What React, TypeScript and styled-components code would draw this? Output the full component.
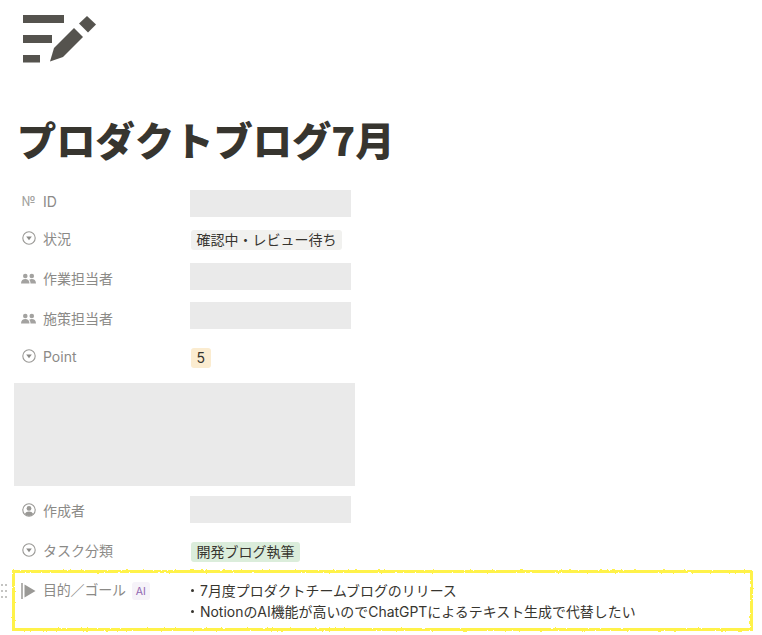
import React from "react";
import styled, { createGlobalStyle } from "styled-components";

const Global = createGlobalStyle`
  html, body { margin: 0; padding: 0; background: #fff; }
  body { font-family: Inter, "Liberation Sans", "Noto Sans CJK JP", sans-serif; color: #37352f; }
`;

const Page = styled.div`
  width: 762px;
  height: 635px;
  overflow: hidden;
  display: flex;
  flex-direction: column;
  box-sizing: border-box;
  padding-top: 15px;
`;

const Logo = styled.svg`
  display: block;
  width: 75px;
  height: 48px;
  margin-left: 22px;
  flex: none;
`;

const Title = styled.h1`
  margin: 50px 0 0 17px;
  height: 77px;
  font-size: 39.3px;
  line-height: 52px;
  font-weight: 900;
  color: #37352f;
  font-family: "Noto Sans CJK JP", sans-serif;
  flex: none;
`;

const Row = styled.div<{ $h: number }>`
  display: flex;
  align-items: flex-start;
  height: ${(p) => p.$h}px;
  flex: none;
  padding-left: 21px;
`;

const Label = styled.div<{ $top: number }>`
  display: flex;
  align-items: center;
  gap: 7px;
  width: 169px;
  height: 20px;
  margin-top: ${(p) => p.$top}px;
  font-size: 14px;
  color: #8b8a87;
  font-family: Inter, "Noto Sans CJK JP", sans-serif;
  white-space: nowrap;
  flex: none;
`;

const IconSlot = styled.span`
  width: 15px;
  height: 16px;
  display: inline-flex;
  align-items: center;
  justify-content: center;
  font-size: 13px;
  color: #a3a2a0;
  flex: none;
`;

const GoalSlot = styled(IconSlot)`
  margin-top: 3px;
`;

const Redacted = styled.div`
  width: 161px;
  height: 27px;
  background: #eaeaea;
`;

const Pill = styled.span<{ $bg: string; $top: number }>`
  display: inline-block;
  margin: ${(p) => p.$top}px 0 0 1px;
  padding: 0 5.5px;
  height: 20px;
  line-height: 20px;
  border-radius: 3px;
  font-size: 14px;
  color: #37352f;
  background: ${(p) => p.$bg};
  font-family: Inter, "Noto Sans CJK JP", sans-serif;
  white-space: nowrap;
`;

const Block = styled.div`
  width: 341px;
  height: 103px;
  margin: 0 0 10px 14px;
  background: #eaeaea;
  flex: none;
`;

const Highlight = styled.div`
  position: relative;
  box-sizing: border-box;
  width: 741px;
  height: 60px;
  margin-left: 12px;
  padding: 8px 0 0 9px;
  display: flex;
  align-items: flex-start;
  flex: none;
`;

const Scribble = styled.svg`
  position: absolute;
  left: -3px;
  top: -3px;
  width: 747px;
  height: 66px;
  pointer-events: none;
`;

const Handle = styled.svg`
  position: absolute;
  left: -11px;
  top: 13px;
  width: 6px;
  height: 14px;
`;

const GoalLabel = styled(Label)`
  margin-top: 0;
  gap: 7px;
`;

const GoalText = styled.span`
  letter-spacing: -0.2px;
`;

const AiBadge = styled.span`
  margin: 4px 0 0 -1px;
  width: 18px;
  height: 18px;
  display: inline-flex;
  align-items: center;
  justify-content: center;
  border-radius: 3px;
  background: #f6f3f9;
  color: #9065b0;
  font-size: 10.5px;
`;

const Lines = styled.div`
  display: flex;
  flex-direction: column;
  margin-top: 1px;
  font-size: 13.95px;
  line-height: 21px;
  color: #37352f;
  font-family: Inter, "Noto Sans CJK JP", sans-serif;
  white-space: nowrap;
`;

const Line = styled.div`
  display: flex;
  align-items: center;
`;

const Dot = styled.span`
  width: 3px;
  height: 3px;
  margin: 0 6px 0 1px;
  border-radius: 50%;
  background: #37352f;
  flex: none;
`;

const SelectIcon = () => (
  <svg width="14" height="14" viewBox="0 0 14 14">
    <circle cx="7" cy="7" r="6.2" fill="none" stroke="#9a9996" strokeWidth="1.1" />
    <path d="M4.2 5.4h5.6L7 9.2z" fill="#8b8a87" />
  </svg>
);

const PeopleIcon = () => (
  <svg width="15" height="11" viewBox="0 0 15 11">
    <circle cx="4.3" cy="3" r="2.3" fill="#a3a2a0" />
    <circle cx="10.8" cy="3" r="2.3" fill="#a3a2a0" />
    <path d="M0 10.5c0-3 2-4.4 4.3-4.400s4.200 1.400 4.200 4.400zM9.500 10.500c0-1.800-.5-3-1.300-3.800.7-.4 1.600-.6 2.600-.6 2.300 0 4.200 1.400 4.200 4.400z" fill="#a3a2a0" />
  </svg>
);

const PersonIcon = () => (
  <svg width="14" height="14" viewBox="0 0 14 14">
    <circle cx="7" cy="7" r="6.200" fill="none" stroke="#9a9996" strokeWidth="1.100" />
    <circle cx="7" cy="5.400" r="2.400" fill="#9a9996" />
    <path d="M2.800 11c.8-1.700 2.300-2.500 4.200-2.500s3.400.8 4.200 2.500C10 12.300 8.600 13 7 13s-3-.7-4.200-2z" fill="#9a9996" />
  </svg>
);

const GoalIcon = () => (
  <svg width="15" height="16" viewBox="0 0 15 16">
    <rect x="0" y="0" width="2" height="16" fill="#b3b2b0" />
    <path d="M3.500 1.500L14.500 8l-11 6.500z" fill="#9a9996" />
  </svg>
);

export default function App() {
  return (
    <Page>
      <Global />
      <Logo viewBox="0 0 75 48">
        <g fill="#55534e">
          <rect x="1" y="0" width="41" height="8" />
          <rect x="1" y="20" width="29" height="8" />
          <rect x="1" y="40" width="17" height="7.500" />
          <path d="M28 46.500l4-13.500 20-20 9 9-20 20z" />
          <path d="M65 1l9 8.500-8 8-9-9z" />
        </g>
      </Logo>
      <Title>プロダクトブログ7月</Title>

      <Row $h={40}>
        <Label $top={1}>
          <IconSlot>№</IconSlot>ID
        </Label>
        <Redacted />
      </Row>
      <Row $h={33}>
        <Label $top={-2}>
          <IconSlot><SelectIcon /></IconSlot>状況
        </Label>
        <Pill $bg="#f1f1ef" $top={0}>確認中・レビュー待ち</Pill>
      </Row>
      <Row $h={39}>
        <Label $top={5}>
          <IconSlot><PeopleIcon /></IconSlot>作業担当者
        </Label>
        <Redacted />
      </Row>
      <Row $h={46}>
        <Label $top={6}>
          <IconSlot><PeopleIcon /></IconSlot>施策担当者
        </Label>
        <Redacted />
      </Row>
      <Row $h={35}>
        <Label $top={-2}>
          <IconSlot><SelectIcon /></IconSlot>Point
        </Label>
        <Pill $bg="#fbecd0" $top={0}>5</Pill>
      </Row>
      <Block />
      <Row $h={46}>
        <Label $top={4}>
          <IconSlot><PersonIcon /></IconSlot>作成者
        </Label>
        <Redacted />
      </Row>
      <Row $h={29}>
        <Label $top={-2}>
          <IconSlot><SelectIcon /></IconSlot>タスク分類
        </Label>
        <Pill $bg="#dbeddb" $top={0}>開発ブログ執筆</Pill>
      </Row>
      <Highlight>
        <Scribble viewBox="0 0 747 66">
          <filter id="rough" x="-2%" y="-10%" width="104%" height="120%">
            <feTurbulence type="fractalNoise" baseFrequency="0.35" numOctaves="2" seed="4" />
            <feDisplacementMap in="SourceGraphic" scale="2.500" />
          </filter>
          <rect x="4.500" y="3.500" width="738" height="58" fill="none" stroke="#fff24a" strokeWidth="3" filter="url(#rough)" />
        </Scribble>
        <Handle viewBox="0 0 6 14">
          <g fill="#c4c4c2">
            <rect x="0" y="0" width="2" height="2" />
            <rect x="4" y="0" width="2" height="2" />
            <rect x="0" y="6" width="2" height="2" />
            <rect x="4" y="6" width="2" height="2" />
            <rect x="0" y="12" width="2" height="2" />
            <rect x="4" y="12" width="2" height="2" />
          </g>
        </Handle>
        <GoalLabel $top={0}>
          <GoalSlot><GoalIcon /></GoalSlot><GoalText>目的／ゴール</GoalText><AiBadge>AI</AiBadge>
        </GoalLabel>
        <Lines>
          <Line><Dot />7月度プロダクトチームブログのリリース</Line>
          <Line><Dot />NotionのAI機能が高いのでChatGPTによるテキスト生成で代替したい</Line>
        </Lines>
      </Highlight>
    </Page>
  );
}
